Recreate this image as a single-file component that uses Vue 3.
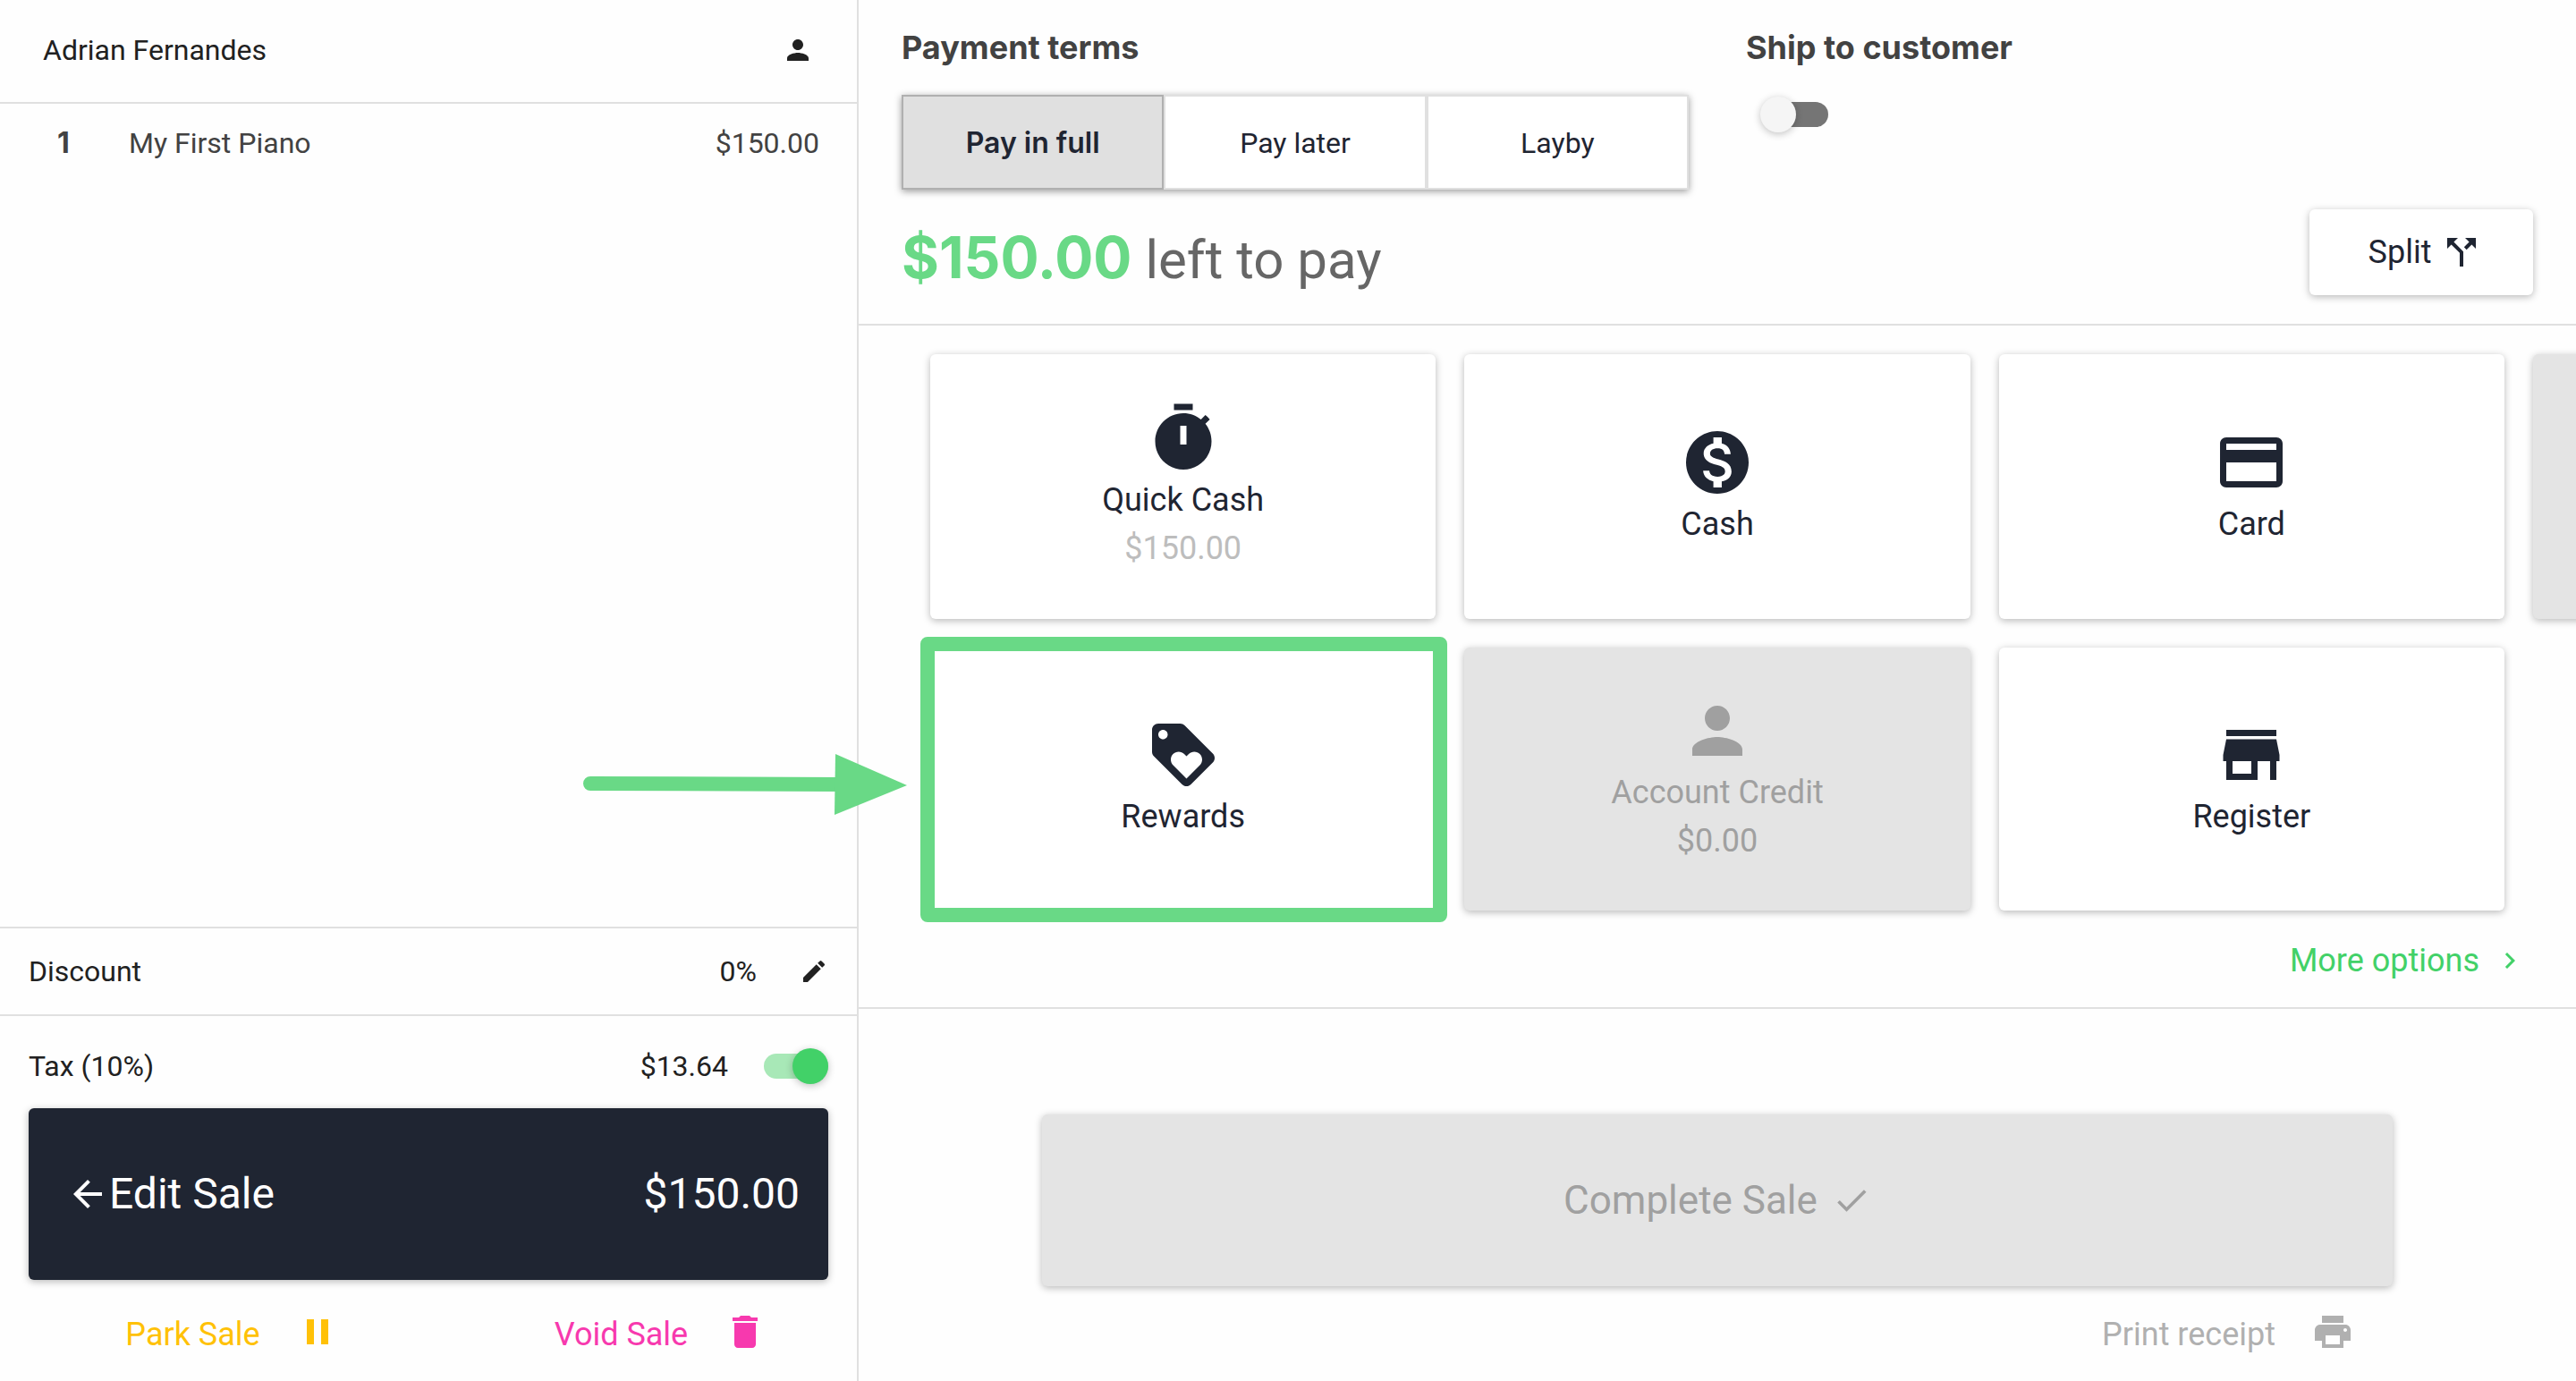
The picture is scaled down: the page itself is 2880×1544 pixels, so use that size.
<script setup>
import { ref } from 'vue'

const terms = ['Pay in full', 'Pay later', 'Layby']
const selectedTerm = ref('Pay in full')
const shipToCustomer = ref(false)
const taxEnabled = ref(true)

const icons = {
  person: 'M12 12c2.21 0 4-1.79 4-4s-1.79-4-4-4-4 1.79-4 4 1.79 4 4 4zm0 2c-2.67 0-8 1.34-8 4v2h16v-2c0-2.66-5.33-4-8-4z',
  edit: 'M3 17.25V21h3.75L17.81 9.94l-3.75-3.75L3 17.25zM20.71 7.04a.996.996 0 000-1.41l-2.34-2.34a.996.996 0 00-1.41 0l-1.83 1.83 3.75 3.75 1.83-1.83z',
  back: 'M20 11H7.83l5.59-5.59L12 4l-8 8 8 8 1.41-1.41L7.83 13H20v-2z',
  pause: 'M6 19h4V5H6v14zm8-14v14h4V5h-4z',
  trash: 'M6 19c0 1.1.9 2 2 2h8c1.1 0 2-.9 2-2V7H6v12zM19 4h-3.5l-1-1h-5l-1 1H5v2h14V4z',
  split: 'M14 4l2.29 2.29-2.88 2.88 1.42 1.42 2.88-2.88L20 10V4zm-4 0H4v6l2.29-2.29 4.71 4.7V20h2v-8.41l-5.29-5.3z',
  timer: 'M15 1H9v2h6V1zm-4 13h2V8h-2v6zm8.03-6.61l1.42-1.42c-.43-.51-.9-.99-1.41-1.41l-1.42 1.42C16.07 4.74 14.12 4 12 4c-4.97 0-9 4.03-9 9s4.02 9 9 9 9-4.03 9-9c0-2.12-.74-4.07-1.97-5.61z',
  cash: 'M12 2C6.48 2 2 6.48 2 12s4.48 10 10 10 10-4.48 10-10S17.52 2 12 2zm1.41 16.09V20h-2.67v-1.93c-1.71-.36-3.16-1.46-3.27-3.4h1.96c.1 1.05.82 1.87 2.65 1.87 1.96 0 2.4-.98 2.4-1.59 0-.83-.44-1.61-2.67-2.14-2.48-.6-4.18-1.62-4.18-3.67 0-1.72 1.39-2.84 3.11-3.21V4h2.67v1.95c1.86.45 2.79 1.86 2.85 3.39H14.3c-.05-1.11-.64-1.87-2.22-1.87-1.5 0-2.4.68-2.4 1.64 0 .84.65 1.39 2.67 1.91s4.18 1.39 4.18 3.91c-.01 1.83-1.38 2.83-3.12 3.16z',
  card: 'M20 4H4c-1.11 0-1.99.89-1.99 2L2 18c0 1.11.89 2 2 2h16c1.11 0 2-.89 2-2V6c0-1.11-.89-2-2-2zm0 14H4v-6h16v6zm0-10H4V6h16v2z',
  loyalty: 'M21.41 11.58l-9-9C12.05 2.22 11.55 2 11 2H4c-1.1 0-2 .9-2 2v7c0 .55.22 1.05.59 1.42l9 9c.36.36.86.58 1.41.58.55 0 1.05-.22 1.41-.59l7-7c.37-.36.59-.86.59-1.41 0-.55-.23-1.06-.59-1.42zM5.5 7C4.67 7 4 6.33 4 5.5S4.67 4 5.5 4 7 4.67 7 5.5 6.33 7 5.5 7zm11.77 8.27L13 19.54l-4.27-4.27C8.28 14.81 8 14.19 8 13.5c0-1.38 1.12-2.5 2.5-2.5.69 0 1.32.28 1.77.74l.73.72.73-.73c.45-.45 1.08-.73 1.77-.73 1.38 0 2.5 1.12 2.5 2.5 0 .69-.28 1.32-.73 1.77z',
  store: 'M20 4H4v2h16V4zm1 10v-2l-1-5H4l-1 5v2h1v6h10v-6h4v6h2v-6h1zm-9 4H6v-4h6v4z',
  chevron: 'M10 6L8.59 7.41 13.17 12l-4.58 4.59L10 18l6-6z',
  check: 'M9 16.17L4.83 12l-1.42 1.41L9 19 21 7l-1.41-1.41z',
  print: 'M19 8H5c-1.66 0-3 1.34-3 3v6h4v4h12v-4h4v-6c0-1.66-1.34-3-3-3zm-3 11H8v-5h8v5zm3-7c-.55 0-1-.45-1-1s.45-1 1-1 1 .45 1 1-.45 1-1 1zm-1-9H6v4h12V3z',
}

const methods = [
  { name: 'Quick Cash', amount: '$150.00', icon: 'timer' },
  { name: 'Rewards', icon: 'loyalty', highlighted: true },
  { name: 'Cash', icon: 'cash' },
  { name: 'Account Credit', amount: '$0.00', icon: 'person', disabled: true },
  { name: 'Card', icon: 'card' },
  { name: 'Register', icon: 'store' },
  { name: '', disabled: true },
]
</script>

<template>
  <div class="pos">
    <aside class="sale">
      <header class="customer">
        <span>Adrian Fernandes</span>
        <svg class="icon-s" viewBox="0 0 24 24"><path :d="icons.person" /></svg>
      </header>

      <ul class="lines">
        <li class="line">
          <b class="qty">1</b>
          <span class="item">My First Piano</span>
          <span>$150.00</span>
        </li>
      </ul>

      <div class="discount">
        <span class="grow">Discount</span>
        <span>0%</span>
        <svg class="icon-xs" viewBox="0 0 24 24"><path :d="icons.edit" /></svg>
      </div>

      <div class="tax">
        <label class="grow" for="tax">Tax (10%)</label>
        <span>$13.64</span>
        <input id="tax" v-model="taxEnabled" class="switch" type="checkbox" />
      </div>

      <button class="edit-sale" type="button">
        <svg class="icon-m" viewBox="0 0 24 24"><path :d="icons.back" /></svg>
        <span class="grow">Edit Sale</span>
        <span>$150.00</span>
      </button>

      <footer class="sale-actions">
        <button class="action park" type="button">
          Park Sale
          <svg class="icon-m" viewBox="0 0 24 24"><path :d="icons.pause" /></svg>
        </button>
        <button class="action void" type="button">
          Void Sale
          <svg class="icon-m" viewBox="0 0 24 24"><path :d="icons.trash" /></svg>
        </button>
      </footer>
    </aside>

    <main class="payment">
      <section class="summary">
        <div class="options">
          <div>
            <h2 class="title">Payment terms</h2>
            <div class="terms">
              <button
                v-for="term in terms"
                :key="term"
                type="button"
                class="term"
                :class="{ selected: term === selectedTerm }"
                @click="selectedTerm = term"
              >{{ term }}</button>
            </div>
          </div>
          <div>
            <label class="title" for="ship">Ship to customer</label>
            <input id="ship" v-model="shipToCustomer" class="switch ship" type="checkbox" />
          </div>
        </div>
        <div class="balance">
          <p class="left"><b class="due">$150.00</b> left to pay</p>
          <button class="split" type="button">
            Split
            <svg class="icon-m" viewBox="0 0 24 24"><path :d="icons.split" /></svg>
          </button>
        </div>
      </section>

      <section class="methods">
        <div class="grid">
          <button
            v-for="(method, i) in methods"
            :key="i"
            type="button"
            class="method"
            :class="{ highlighted: method.highlighted }"
            :disabled="method.disabled"
          >
            <svg v-if="method.icon" class="icon-l" viewBox="0 0 24 24"><path :d="icons[method.icon]" /></svg>
            <span>{{ method.name }}</span>
            <span v-if="method.amount" class="amount">{{ method.amount }}</span>
            <svg v-if="method.highlighted" class="pointer" viewBox="0 0 362 70">
              <path d="M8 34L290 35" stroke="currentColor" stroke-width="16" stroke-linecap="round" />
              <path d="M282 1L362 36L281 69z" />
            </svg>
          </button>
        </div>
        <div class="more">
          <a href="#more">More options
            <svg class="icon-s" viewBox="0 0 24 24"><path :d="icons.chevron" /></svg>
          </a>
        </div>
      </section>

      <section class="finish">
        <button class="complete" type="button" disabled>
          Complete Sale
          <svg class="icon-c" viewBox="0 0 24 24"><path :d="icons.check" /></svg>
        </button>
        <button class="print" type="button" disabled>
          Print receipt
          <svg class="icon-m" viewBox="0 0 24 24"><path :d="icons.print" /></svg>
        </button>
      </section>
    </main>
  </div>
</template>

<style>
body {
  margin: 0;
  background: #fff;
}
</style>

<style scoped>
.pos {
  display: grid;
  grid-template-columns: 1fr 2fr;
  min-height: 100vh;
  overflow: hidden;
  font: 32px/48px Roboto, sans-serif;
  color: #212121;
  background: #fefefe;
}
.pos * {
  box-sizing: border-box;
}
button {
  margin: 0;
  padding: 0;
  border: 0;
  background: none;
  font: inherit;
  color: inherit;
}
svg {
  display: block;
  flex: none;
  fill: currentColor;
  fill-rule: evenodd;
}
.icon-xs { width: 32px; height: 32px; }
.icon-s { width: 36px; height: 36px; }
.icon-c { width: 44px; height: 44px; }
.icon-m { width: 48px; height: 48px; }
.icon-l { width: 84px; height: 84px; }
.grow { flex: 1; text-align: left; }

/* Sale column */
.sale {
  display: flex;
  flex-direction: column;
  border-right: 2px solid #e0e0e0;
}
.customer {
  display: flex;
  align-items: center;
  justify-content: space-between;
  height: 116px;
  padding: 0 48px 2px;
  border-bottom: 2px solid #e0e0e0;
}
.lines {
  flex: 1;
  margin: 0;
  padding: 20px 42px 20px 64px;
  list-style: none;
  color: #424242;
}
.line { display: flex; }
.qty {
  width: 80px;
  font-family: Inter, sans-serif;
}
.item { flex: 1; }
.discount {
  display: flex;
  align-items: center;
  gap: 48px;
  height: 100px;
  padding: 0 32px;
  border: solid #e0e0e0;
  border-width: 2px 0;
}
.tax {
  display: flex;
  align-items: center;
  gap: 40px;
  height: 103px;
  padding: 8px 32px 0;
}
.switch {
  appearance: none;
  position: relative;
  display: block;
  width: 72px;
  height: 28px;
  margin: 0;
  border-radius: 14px;
  background: #757575;
}
.switch::before {
  content: '';
  position: absolute;
  top: -6px;
  left: -4px;
  width: 40px;
  height: 40px;
  border-radius: 50%;
  background: #f5f5f5;
  box-shadow: 0 2px 8px rgba(0, 0, 0, .24);
}
.switch:checked { background: #a8e8b7; }
.switch:checked::before { left: 32px; background: #42d168; }
.ship { margin: 40px 20px; }

.edit-sale {
  display: flex;
  align-items: center;
  height: 192px;
  margin: 0 32px;
  padding: 0 32px 0 42px;
  border-radius: 6px;
  background: #1f2532;
  box-shadow: 0 2px 8px rgba(0, 0, 0, .28);
  color: #fff;
  font-size: 48px;
}
.sale-actions {
  display: flex;
  height: 113px;
  padding-top: 8px;
}
.action {
  display: flex;
  flex: 1;
  align-items: center;
  justify-content: center;
  gap: 40px;
  padding-left: 40px;
  font-size: 36px;
}
.action svg, .print svg { margin-bottom: 6px; }
.park { color: #ffc107; }
.void { color: #f739ae; }

/* Payment column */
.summary {
  padding: 32px 48px;
  border-bottom: 2px solid #e0e0e0;
}
.options {
  display: grid;
  grid-template-columns: 1fr 1fr;
  gap: 64px;
}
.title {
  display: block;
  margin: 0;
  font: 700 36px/42px Inter, sans-serif;
  color: #424242;
}
.terms {
  display: flex;
  margin-top: 32px;
  box-shadow: 0 2px 8px rgba(0, 0, 0, .4);
}
.term {
  flex: 1;
  height: 106px;
  padding-top: 2px;
  border: 2px solid #e0e0e0;
  background: #fff;
  color: #1f2532;
}
.selected {
  border-color: #b0b0b0;
  background: #e0e0e0;
  font-family: Inter, sans-serif;
  font-weight: 600;
}
.balance {
  display: flex;
  align-items: flex-end;
  justify-content: space-between;
  height: 96px;
  margin-top: 22px;
}
.left {
  margin: 0;
  font-size: 60px;
  line-height: 78px;
  color: #666;
}
.due {
  font-family: Inter, sans-serif;
  font-size: 64px;
  font-weight: 700;
  color: #69d986;
}
.split {
  display: flex;
  align-items: center;
  justify-content: center;
  gap: 10px;
  width: 250px;
  height: 96px;
  padding-left: 10px;
  border-radius: 6px;
  background: #fff;
  box-shadow: 0 2px 8px rgba(0, 0, 0, .28);
  color: #1f2532;
  font-size: 36px;
}
.methods {
  padding-top: 32px;
  border-bottom: 2px solid #e0e0e0;
}
.grid {
  display: grid;
  grid-auto-flow: column;
  grid-template-rows: 296px 294px;
  grid-auto-columns: calc((100% - 64px) / 3);
  gap: 32px;
  margin: 0 80px;
}
.method {
  position: relative;
  display: flex;
  flex-direction: column;
  align-items: center;
  justify-content: center;
  border-radius: 6px;
  background: #fff;
  box-shadow: 0 2px 8px rgba(0, 0, 0, .28);
  color: #1f2532;
  font-size: 36px;
  line-height: 54px;
}
.amount { color: #bdbdbd; }
.method:disabled, .complete {
  background: #e4e4e4;
  color: #a0a0a0;
}
.method:disabled .amount { color: inherit; }
.highlighted::after {
  content: '';
  position: absolute;
  inset: -12px -13px -13px -11px;
  border: 16px solid #69d986;
  border-radius: 8px;
}
.pointer {
  position: absolute;
  right: calc(100% + 26px);
  top: 118px;
  width: 362px;
  height: 70px;
  color: #69d986;
}
.more {
  display: flex;
  align-items: center;
  justify-content: flex-end;
  height: 108px;
  padding: 4px 56px 0 0;
}
.more a {
  display: flex;
  align-items: center;
  gap: 16px;
  color: #42d168;
  font-size: 36px;
  text-decoration: none;
}
.finish {
  display: flex;
  flex-direction: column;
  padding: 118px 205px 0;
}
.complete {
  display: flex;
  align-items: center;
  justify-content: center;
  gap: 16px;
  height: 192px;
  border-radius: 6px;
  box-shadow: 0 2px 8px rgba(0, 0, 0, .28);
  font-size: 44px;
}
.print {
  display: flex;
  align-items: center;
  align-self: flex-end;
  gap: 40px;
  height: 106px;
  padding-top: 2px;
  margin-right: 43px;
  color: #b0b0b0;
  font-size: 36px;
}
</style>
